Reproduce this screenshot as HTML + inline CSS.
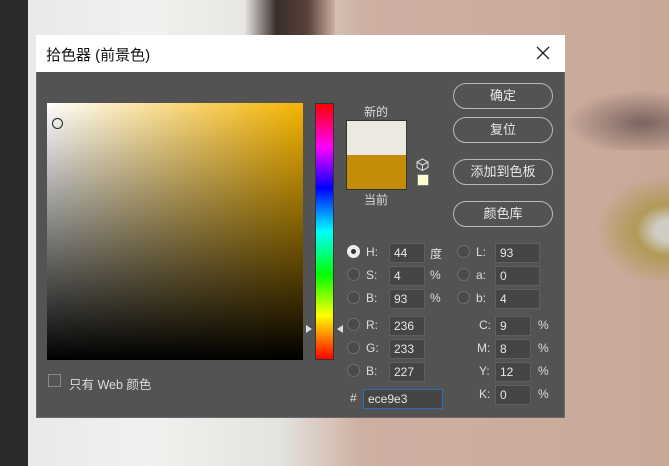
<!DOCTYPE html><html><head><meta charset="utf-8"><style>
*{margin:0;padding:0;box-sizing:border-box}
body{width:669px;height:466px;overflow:hidden;position:relative;font-family:"Liberation Sans","Noto Sans CJK SC",sans-serif;background:#cdb0a3}
.a{position:absolute}
.t{color:#dcdcdc;font-size:12px;position:absolute;white-space:nowrap}
.in{position:absolute;background:#454545;border:1px solid #5f5f5f;color:#e6e6e6;font-size:12px;padding:2px 0 0 4px;height:20px}
.rd{position:absolute;width:13px;height:13px;border-radius:50%;border:1px solid #6e6e6e;background:#4a4a4a}
.btn{position:absolute;left:453px;width:100px;height:26px;border:1px solid #b8b8b8;border-radius:13px;color:#e8e8e8;font-size:13px;text-align:center;line-height:24px}
</style></head><body>
<div class="a" style="left:0;top:0;width:669px;height:466px;background:linear-gradient(90deg,#2a2a2a 28px,#e9e9e7 28px,#f1f1ef 150px,#e4e3e0 280px,#d8c4b8 330px,#cdb0a3 360px,#c9a898)"></div>
<div class="a" style="left:245px;top:0;width:90px;height:40px;background:linear-gradient(90deg,#e4e3e0,#3a2e2a 35%,#5a4238 70%,#cdb0a3)"></div>
<div class="a" style="left:565px;top:90px;width:104px;height:60px;background:radial-gradient(ellipse at 75% 55%,#7a6460,transparent 70%)"></div>
<div class="a" style="left:590px;top:170px;width:79px;height:110px;background:radial-gradient(ellipse at 100% 55%,#d0ccc4 12%,#b09a58 30%,transparent 65%)"></div>
<div class="a" style="left:36px;top:35px;width:529px;height:383px;background:#535353;border:1px solid #6a6a6a"></div>
<div class="a" style="left:36px;top:35px;width:529px;height:37px;background:#fff"></div>
<div class="a" style="left:46px;top:44px;font-size:15px;color:#111">拾色器 (前景色)</div>
<svg class="a" style="left:535px;top:45px" width="16" height="16"><path d="M2 2L14 14M14 2L2 14" stroke="#222" stroke-width="1.3"/></svg>
<div class="a" style="left:47px;top:103px;width:256px;height:257px;background:linear-gradient(to bottom,transparent,#000),linear-gradient(to right,#fff,#f6b400)"></div>
<div class="a" style="left:52px;top:118px;width:11px;height:11px;border-radius:50%;border:1px solid #222"></div>
<div class="a" style="left:315px;top:103px;width:19px;height:257px;background:linear-gradient(to bottom,#f00,#f0f 17%,#00f 33%,#0ff 50%,#0f0 67%,#ff0 83%,#f00);border:1px solid #333"></div>
<div class="a" style="left:306px;top:325px;width:0;height:0;border-top:4px solid transparent;border-bottom:4px solid transparent;border-left:6px solid #ddd"></div>
<div class="a" style="left:337px;top:325px;width:0;height:0;border-top:4px solid transparent;border-bottom:4px solid transparent;border-right:6px solid #ddd"></div>
<div class="t" style="left:364px;top:103px">新的</div>
<div class="a" style="left:346px;top:120px;width:61px;height:70px;border:1px solid #333;background:linear-gradient(#ece9e3 50%,#c38e05 50%)"></div>
<div class="t" style="left:364px;top:191px">当前</div>
<svg class="a" style="left:416px;top:158px" width="13" height="13"><path d="M6.5 1L12 4V9.5L6.5 12.5L1 9.5V4Z M1 4L6.5 7L12 4 M6.5 7V12.5" stroke="#ddd" fill="none"/></svg>
<div class="a" style="left:417px;top:174px;width:12px;height:12px;background:#fdfdd0;border:1px solid #777"></div>
<div class="btn" style="top:83px">确定</div>
<div class="btn" style="top:117px">复位</div>
<div class="btn" style="top:159px">添加到色板</div>
<div class="btn" style="top:201px">颜色库</div>
<div class="rd" style="left:347px;top:245px;background:#eee;border-color:#eee"></div><div class="a" style="left:351px;top:249px;width:5px;height:5px;border-radius:50%;background:#333"></div>
<div class="rd" style="left:347px;top:268px"></div><div class="rd" style="left:347px;top:291px"></div>
<div class="rd" style="left:347px;top:318px"></div><div class="rd" style="left:347px;top:341px"></div><div class="rd" style="left:347px;top:364px"></div>
<div class="rd" style="left:457px;top:245px"></div><div class="rd" style="left:457px;top:268px"></div><div class="rd" style="left:457px;top:291px"></div>
<div class="t" style="left:366px;top:245px">H:</div><div class="t" style="left:366px;top:268px">S:</div><div class="t" style="left:366px;top:291px">B:</div>
<div class="t" style="left:366px;top:318px">R:</div><div class="t" style="left:366px;top:341px">G:</div><div class="t" style="left:366px;top:364px">B:</div>
<div class="in" style="left:389px;top:243px;width:36px">44</div><div class="in" style="left:389px;top:266px;width:36px">4</div><div class="in" style="left:389px;top:289px;width:36px">93</div>
<div class="in" style="left:389px;top:316px;width:36px">236</div><div class="in" style="left:389px;top:339px;width:36px">233</div><div class="in" style="left:389px;top:362px;width:36px">227</div>
<div class="t" style="left:430px;top:245px">度</div><div class="t" style="left:430px;top:268px">%</div><div class="t" style="left:430px;top:291px">%</div>
<div class="t" style="left:476px;top:245px">L:</div><div class="t" style="left:476px;top:268px">a:</div><div class="t" style="left:476px;top:291px">b:</div>
<div class="in" style="left:495px;top:243px;width:45px">93</div><div class="in" style="left:495px;top:266px;width:45px">0</div><div class="in" style="left:495px;top:289px;width:45px">4</div>
<div class="t" style="left:479px;top:318px">C:</div><div class="t" style="left:477px;top:341px">M:</div><div class="t" style="left:479px;top:364px">Y:</div><div class="t" style="left:479px;top:387px">K:</div>
<div class="in" style="left:495px;top:316px;width:36px">9</div><div class="in" style="left:495px;top:339px;width:36px">8</div><div class="in" style="left:495px;top:362px;width:36px">12</div><div class="in" style="left:495px;top:385px;width:36px">0</div>
<div class="t" style="left:538px;top:318px">%</div><div class="t" style="left:538px;top:341px">%</div><div class="t" style="left:538px;top:364px">%</div><div class="t" style="left:538px;top:387px">%</div>
<div class="t" style="left:350px;top:391px">#</div>
<div class="in" style="left:363px;top:389px;width:80px;border-color:#2e6bb8">ece9e3</div>
<div class="a" style="left:48px;top:374px;width:13px;height:13px;border:1px solid #888"></div>
<div class="t" style="left:69px;top:374px;font-size:12.5px">只有 Web 颜色</div>
</body></html>
